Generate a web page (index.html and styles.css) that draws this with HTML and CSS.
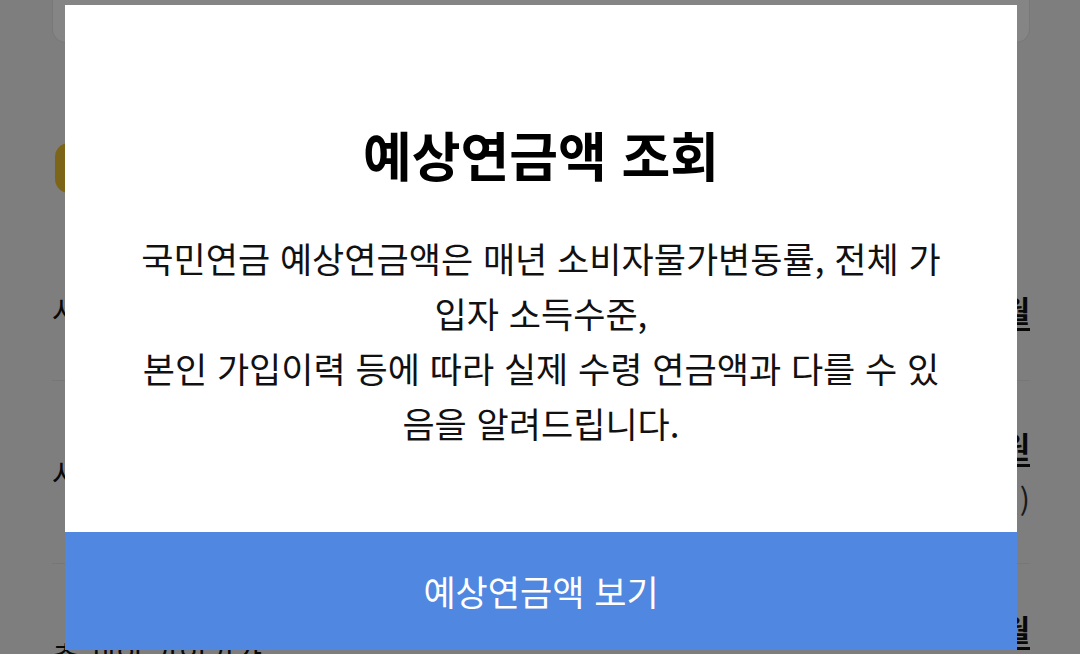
FILE: index.html
```html
<!DOCTYPE html>
<html lang="ko">
<head>
  <meta charset="UTF-8" />
  <meta name="viewport" content="width=device-width, initial-scale=1.0" />
  <title>예상연금액 조회</title>
  <link rel="stylesheet" href="styles.css">
</head>
<body>
  <div class="page">
    <div class="top-card"></div>

    <section class="info">
      <div class="info-head">
        <span class="info-icon"></span>
        <span class="info-title">나의 국민연금 가입내역</span>
      </div>

      <div class="row row-single">
        <span class="row-label">사업장 가입기간</span>
        <div class="row-value"><a href="#">120개월</a></div>
      </div>
      <div class="row">
        <span class="row-label">사업장 납부총액</span>
        <div class="row-value">
          <a href="#">12,345,000원</a>
          <span class="row-sub">(월 평균 102,875원)</span>
        </div>
      </div>
      <div class="row">
        <span class="row-label">총 재외 가입기간</span>
        <div class="row-value">
          <a href="#">0개월</a>
          <span class="row-sub">(해당 없음)</span>
        </div>
      </div>
    </section>
  </div>

  <div class="overlay">
    <div class="dialog">
      <div class="dialog-body">
        <h2 class="dialog-title">예상연금액 조회</h2>
        <p class="dialog-text">국민연금 예상연금액은 매년 소비자물가변동률, 전체 가입자 소득수준,<br>본인 가입이력 등에 따라 실제 수령 연금액과 다를 수 있음을 알려드립니다.</p>
      </div>
      <button class="dialog-btn">예상연금액 보기</button>
    </div>
  </div>
</body>
</html>
```

FILE: styles.css
```css
* {
  box-sizing: border-box;
}
body {
  margin: 0;
  background: #f2f2f2;
  font-family: "Noto Sans CJK KR", "Noto Sans", sans-serif;
  color: #111;
}
.page {
  height: 654px;
  overflow: hidden;
  padding: 0 50px 0 52px;
}
.top-card {
  height: 43px;
  background: #fff;
  border: 1px solid #e6e6e6;
  border-top: none;
  border-radius: 0 0 14px 14px;
}
.info {
  margin-top: 100px;
}
.info-head {
  display: flex;
  align-items: center;
  gap: 16px;
  height: 50px;
  padding-left: 3px;
}
.info-icon {
  width: 50px;
  height: 50px;
  border-radius: 14px;
  background: #f0c12e;
}
.info-title {
  font-size: 32px;
  font-weight: 700;
}
.row {
  display: flex;
  justify-content: space-between;
  align-items: center;
  height: 183px;
  border-bottom: 1px solid #e4e4e4;
  font-size: 30px;
}
.row-single {
  height: 188px;
  padding-top: 44px;
}
.row-value {
  display: flex;
  flex-direction: column;
  align-items: flex-end;
  gap: 10px;
}
.row-value a {
  color: #111;
  font-weight: 700;
  text-decoration: underline;
  text-underline-offset: 6px;
}
.row-sub {
  color: #333;
}

/* dimmed layer with the notice dialog */
.overlay {
  position: fixed;
  inset: 0;
  background: rgba(0, 0, 0, 0.48);
  display: flex;
  align-items: center;
  justify-content: center;
}
.dialog {
  width: 952px;
  height: 645px;
  margin-left: 2px;
  background: #fff;
  display: flex;
  flex-direction: column;
}
.dialog-body {
  flex: 1;
  padding: 115px 68px 0;
  text-align: center;
}
.dialog-title {
  margin: 0;
  font-size: 53px;
  line-height: 68px;
  font-weight: 700;
  color: #000;
}
.dialog-text {
  margin: 42px 0 0;
  font-size: 35px;
  line-height: 55px;
  color: #111;
}
.dialog-btn {
  height: 118px;
  border: none;
  background: #5087e1;
  color: #fff;
  font-family: inherit;
  font-size: 35px;
  cursor: pointer;
}
```
